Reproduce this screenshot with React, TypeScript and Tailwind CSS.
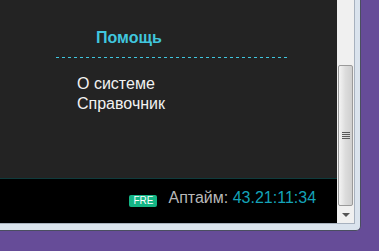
import React from 'react';

const helpLinks = ['О системе', 'Справочник'];

const Scrollbar: React.FC = () => (
  <div className="w-[17px] h-full bg-[#f0f0f0] flex flex-col">
    <div className="h-[65px]" />
    {/* thumb */}
    <div className="mx-[1px] h-[141px] rounded-[2px] border border-[#9a9a9a] bg-gradient-to-r from-[#f4f4f4] via-[#dcdcdc] to-[#cfcfcf] flex items-center justify-center">
      <div className="flex flex-col gap-[1px]">
        <div className="w-[8px] h-[1px] bg-[#5a5a5a]" />
        <div className="w-[8px] h-[1px] bg-[#5a5a5a]" />
        <div className="w-[8px] h-[1px] bg-[#5a5a5a]" />
        <div className="w-[8px] h-[1px] bg-[#5a5a5a]" />
      </div>
    </div>
    {/* down arrow */}
    <div className="flex-1 flex items-center justify-center">
      <div className="w-0 h-0 border-l-[4px] border-r-[4px] border-t-[4px] border-l-transparent border-r-transparent border-t-[#555]" />
    </div>
  </div>
);

export default function App() {
  return (
    <div className="w-[379px] h-[251px] overflow-hidden bg-[#664c98] font-['Liberation_Sans',Arial,sans-serif]">
      <div className="w-[361px] h-[231px] bg-[#dae3ed] border-r border-b border-[#4a4e60] rounded-br-[5px] pr-[5px] pb-[6px]">
        <div className="flex h-full border-r border-b border-[#a7b1be]">
          <div className="w-[338px] h-full flex flex-col">
            {/* Main area */}
            <div className="h-[179px] bg-[#232323] border-b border-[#0f3b3c] pt-[28px]">
              <h3 className="pl-[96px] text-[16px] leading-[20px] font-bold text-[#40c6de]">Помощь</h3>
              <div className="ml-[56px] w-[231px] h-[1px] mt-[9px] bg-[repeating-linear-gradient(90deg,#40c6de_0_3px,transparent_3px_6px)]" />
              <ul className="mt-[16px] pl-[77px]">
                {helpLinks.map((link) => (
                  <li key={link} className="text-[16px] leading-[20px] text-[#f2f2f2]">
                    {link}
                  </li>
                ))}
              </ul>
            </div>
            {/* Footer */}
            <div className="flex-1 bg-black flex justify-end items-start pt-[9px] pr-[21px]">
              <span className="mt-[7px] h-[12px] w-[28px] rounded-[2px] bg-[#14b585] text-white text-[10px] leading-[12px] text-center">
                FRE
              </span>
              <span className="ml-[11px] text-[16px] leading-[20px] text-[#b8b8b8]">
                Аптайм: <span className="text-[#14a3b8]">43.21:11:34</span>
              </span>
            </div>
          </div>
          <Scrollbar />
        </div>
      </div>
    </div>
  );
}
